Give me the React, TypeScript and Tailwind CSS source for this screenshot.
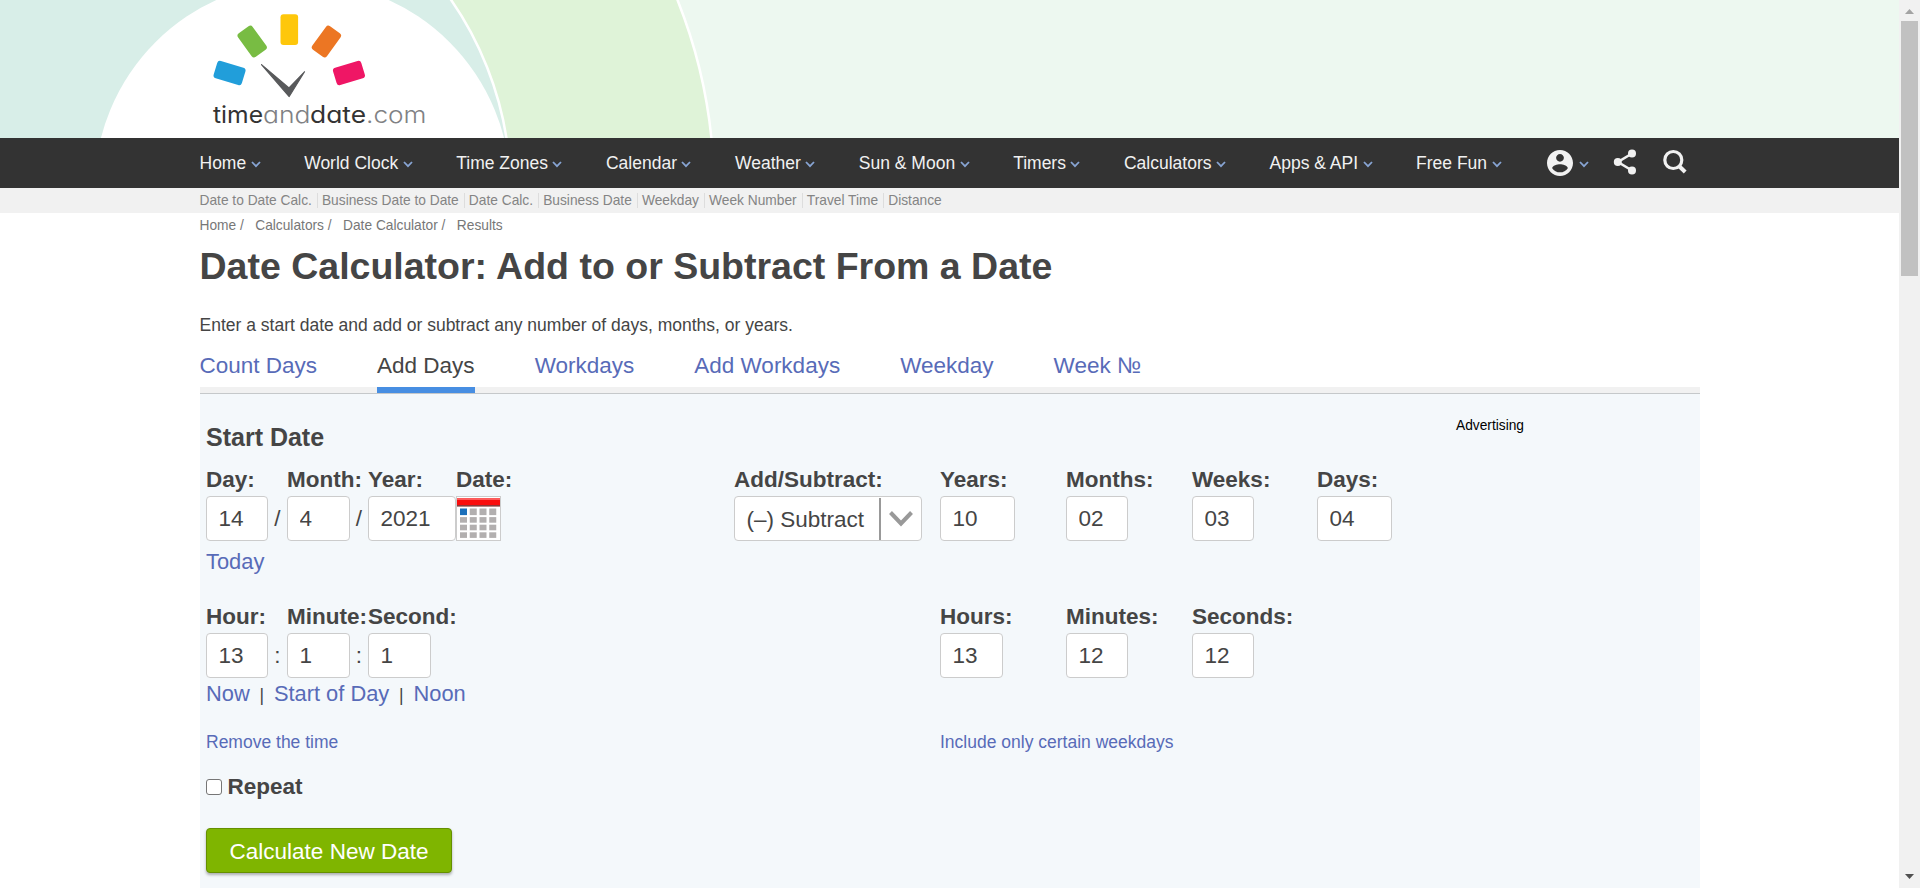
import type { ReactNode } from "react";

const navItems = [
  "Home", "World Clock", "Time Zones", "Calendar", "Weather",
  "Sun & Moon", "Timers", "Calculators", "Apps & API", "Free Fun",
];
const subItems = [
  "Date to Date Calc.", "Business Date to Date", "Date Calc.", "Business Date",
  "Weekday", "Week Number", "Travel Time", "Distance",
];
const crumbs = ["Home /", "Calculators /", "Date Calculator /", "Results"];
const tabs = ["Count Days", "Add Days", "Workdays", "Add Workdays", "Weekday", "Week №"];

function Chevron() {
  return (
    <svg className="mt-[2px] h-[7px] w-[10px]" viewBox="0 0 10 7" fill="none" stroke="#87a4d3" strokeWidth="1.8">
      <path d="M1 1l4 4.2L9 1" />
    </svg>
  );
}

function Banner() {
  return (
    <header className="h-[138px] bg-[#edf8f0]">
      <svg className="block" width="1899" height="138" viewBox="0 0 1899 138">
        <circle cx="201" cy="190" r="513" fill="#dff3d8" stroke="#fff" strokeWidth="2.5" />
        <circle cx="177" cy="190" r="333.5" fill="#d8eee8" stroke="#fff" strokeWidth="2.5" />
        <rect width="100" height="138" fill="#d8eee8" />
        <circle cx="302.5" cy="189.3" r="208" fill="#fff" />
        <rect x="214.800" y="64" width="29.500" height="18" rx="3" fill="#219eda" transform="rotate(17 229.5 73)" />
        <rect x="243.3" y="27" width="18" height="29" rx="3" fill="#78bc43" transform="rotate(-36 252.3 41.7)" />
        <rect x="280.5" y="14.3" width="17.6" height="30.7" rx="3" fill="#fec70b" />
        <rect x="317.3" y="27" width="18" height="29" rx="3" fill="#ec7623" transform="rotate(36 326.3 41.7)" />
        <rect x="334.200" y="64" width="29.500" height="18" rx="3" fill="#ef1665" transform="rotate(-17 349 73)" />
        <path d="M261.500 64.600L289 88L304.500 71.800L289.200 96.500Z" fill="#58595b" stroke="#58595b" strokeWidth="1.2" strokeLinejoin="round" />
        <g className="font-['Inter',sans-serif] [font-feature-settings:'cv11']" fontSize="23.6">
          <text x="213" y="122.7" textLength="50" lengthAdjust="spacingAndGlyphs" fill="#333" fontWeight="400">time</text>
          <text x="263" y="122.7" textLength="47.5" lengthAdjust="spacingAndGlyphs" fill="#808184" fontWeight="300">and</text>
          <text x="310" y="122.7" textLength="56" lengthAdjust="spacingAndGlyphs" fill="#333" fontWeight="400">date</text>
          <text x="366" y="122.7" textLength="60.5" lengthAdjust="spacingAndGlyphs" fill="#808184" fontWeight="300">.com</text>
        </g>
      </svg>
    </header>
  );
}

function Field({ label, value, width, cell, after }: {
  label: string; value: string; width: string; cell: string; after?: string;
}) {
  return (
    <div className={cell}>
      <div className="h-[28px] pt-px text-[22.5px] leading-[28px] font-bold whitespace-nowrap">{label}</div>
      <div className="mt-[3px] flex items-center">
        <input
          defaultValue={value}
          className={"h-[45px] rounded-[4px] border border-[#ccc] bg-white pl-[11.5px] text-[22.5px] " + width}
        />
        {after && <span className="w-[19px] text-center text-[22.5px]">{after}</span>}
      </div>
    </div>
  );
}

function CalendarIcon() {
  return (
    <svg className="mt-[3px] block" width="45" height="45" viewBox="0 0 45 45">
      <rect x=".5" y=".5" width="44" height="44" fill="#fff" stroke="#ccc" />
      <rect x="1" y="2" width="43" height="8" fill="#f90d0d" />
      <rect x="1" y="2" width="43" height="2" fill="#fc5a5a" />
      <rect x="1" y="9" width="43" height="1.6" fill="#8a3a3a" />
      {[0, 1, 2, 3].map((r) =>
        [0, 1, 2, 3].map((c) => (
          <rect
            key={r + "-" + c}
            x={4 + c * 9.75}
            y={r === 0 ? 12.5 : 13.5 + r * 7.6}
            width="7"
            height={r === 0 ? 6.6 : 5.6}
            fill={r === 0 && c === 0 ? "#1a6fba" : "#b2afaf"}
          />
        ))
      )}
    </svg>
  );
}

function Link({ children, className }: { children: ReactNode; className?: string }) {
  return <a className={"text-[#586bb8] " + (className ?? "")}>{children}</a>;
}

function Scrollbar() {
  return (
    <div className="flex h-[888px] w-[21px] flex-col items-center justify-between bg-[#f1f1f1]">
      <div className="flex flex-col items-center">
        <svg className="mt-[9px] h-[5px] w-[9px]" viewBox="0 0 9 5"><path d="M4.500 0L9 5H0z" fill="#a3a3a3" /></svg>
        <div className="mt-[7px] h-[255px] w-[17px] bg-[#c1c1c1]" />
      </div>
      <svg className="mb-[9px] h-[5px] w-[9px]" viewBox="0 0 9 5"><path d="M4.500 5L9 0H0z" fill="#505050" /></svg>
    </div>
  );
}

export default function App() {
  return (
    <div className="flex h-[888px] w-[1920px] overflow-hidden bg-white font-['Liberation_Sans',Arial,sans-serif] text-[#454545]">
      <div className="w-[1899px]">
        <Banner />
        <nav className="h-[50px] bg-[#333]">
          <div className="mx-auto flex h-full w-[1500px] items-center">
            <div className="flex w-[1347px] items-center gap-[43.5px] text-[17.5px] whitespace-nowrap text-[#f1f1f1]">
              {navItems.map((n) => (
                <div key={n} className="flex items-center gap-[4.500px]">
                  {n}
                  <Chevron />
                </div>
              ))}
            </div>
            <svg className="mr-[6px] h-[26px] w-[26px]" viewBox="2 2 20 20" fill="#f1f1f1">
              <path d="M12 2C6.480 2 2 6.480 2 12s4.480 10 10 10 10-4.480 10-10S17.520 2 12 2zm0 3c1.660 0 3 1.340 3 3s-1.340 3-3 3-3-1.340-3-3 1.340-3 3-3zm0 14.200c-2.500 0-4.710-1.280-6-3.220.030-1.990 4-3.080 6-3.080 1.990 0 5.970 1.090 6 3.080-1.290 1.940-3.500 3.220-6 3.220z" />
            </svg>
            <Chevron />
            <svg className="-mt-[3px] ml-[24px] h-[26px] w-[24px]" viewBox="0 0 24 26" fill="#f1f1f1">
              <path d="M19 4.500L5 13l14 8.500" fill="none" stroke="#f1f1f1" strokeWidth="2.600" />
              <circle cx="19" cy="4.500" r="4" />
              <circle cx="4.800" cy="13" r="4" />
              <circle cx="19" cy="21.500" r="4" />
            </svg>
            <svg className="-mt-[4px] ml-[26px] h-[25px] w-[24px]" viewBox="0 0 24 25" fill="none" stroke="#f1f1f1" strokeWidth="3.200">
              <circle cx="10.300" cy="11" r="8.500" />
              <path d="M16 17l6.200 6" strokeWidth="4" />
            </svg>
          </div>
        </nav>
        <div className="h-[25px] bg-[#f1f1f1]">
          <div className="mx-auto flex h-full w-[1500px] items-center text-[13.75px] text-[#848484]">
            {subItems.map((s, i) => (
              <span
                key={s}
                className={"mr-[4.1px] h-[15px] pr-[5px] leading-[15px] " + (i < subItems.length - 1 ? "border-r border-[#ddd]" : "")}
              >
                {s}
              </span>
            ))}
          </div>
        </div>
        <main className="mx-auto w-[1500px]">
          <div className="flex h-[24px] gap-[11.4px] pt-px text-[13.75px] leading-[24px] text-[#777]">
            {crumbs.map((c) => <span key={c}>{c}</span>)}
          </div>
          <h1 className="mt-[7px] h-[44px] text-[37.5px] leading-[44px] font-bold">
            Date Calculator: Add to or Subtract From a Date
          </h1>
          <p className="mt-[25px] h-[24px] text-[17.5px] leading-[24px]">
            Enter a start date and add or subtract any number of days, months, or years.
          </p>
          <div className="mt-[13px] flex h-[44px] gap-[60px] border-b border-[#c5c8ca] bg-[linear-gradient(to_bottom,#fff_37px,#f1f1f1_37px)] text-[22.5px]">
            {tabs.map((t) => (
              <div
                key={t}
                className={
                  "h-[43px] pt-px leading-[30px] " +
                  (t === "Add Days" ? "border-b-[6px] border-[#478ee2] text-[#454545]" : "text-[#586bb8]")
                }
              >
                {t}
              </div>
            ))}
          </div>
          <section className="flex h-[500px] bg-[#f4f8fb] pt-[28px] pl-[6.500px]">
            <div className="w-[528px] shrink-0">
              <h2 className="h-[30px] text-[25px] leading-[30px] font-bold">Start Date</h2>
              <div className="mt-[13px] flex">
                <Field label="Day:" value="14" width="w-[62px]" cell="w-[81px]" after="/" />
                <Field label="Month:" value="4" width="w-[63px]" cell="w-[81px]" after="/" />
                <Field label="Year:" value="2021" width="w-[88px]" cell="w-[88px]" />
                <div>
                  <div className="h-[28px] pt-px text-[22.5px] leading-[28px] font-bold">Date:</div>
                  <CalendarIcon />
                </div>
              </div>
              <Link className="mt-[7px] block h-[28px] text-[21.875px] leading-[28px]">Today</Link>
              <div className="mt-[26px] flex">
                <Field label="Hour:" value="13" width="w-[62px]" cell="w-[81px]" after=":" />
                <Field label="Minute:" value="1" width="w-[63px]" cell="w-[81px]" after=":" />
                <Field label="Second:" value="1" width="w-[63px]" cell="w-[87px]" />
              </div>
              <div className="mt-[2px] flex h-[28px] items-baseline gap-[9.8px] text-[21.875px] leading-[28px]">
                <Link>Now</Link>
                <span className="text-[17.5px]">|</span>
                <Link>Start of Day</Link>
                <span className="text-[17.5px]">|</span>
                <Link>Noon</Link>
              </div>
              <Link className="mt-[22px] block h-[24px] text-[17.5px] leading-[24px]">Remove the time</Link>
              <label className="mt-[18px] flex h-[30px] items-center gap-[5.500px] text-[22.5px] leading-[30px] font-bold">
                <input type="checkbox" className="h-[16px] w-[16px] appearance-none rounded-[3px] border border-[#767676] bg-white" />
                Repeat
              </label>
              <button className="mt-[26px] block h-[45px] w-[246px] rounded-[4px] border border-[#659000] bg-[#7fb500] pt-[2px] text-[22.5px] text-white shadow-[0_2px_3px_rgba(0,0,0,0.3)]">
                Calculate New Date
              </button>
            </div>
            <div className="w-[722px] shrink-0 pt-[43px]">
              <div className="flex">
                <div className="w-[206px] shrink-0">
                  <div className="h-[28px] pt-px text-[22.5px] leading-[28px] font-bold">Add/Subtract:</div>
                  <div className="mt-[3px] flex h-[45px] w-[188px] justify-between rounded-[4px] border border-[#ccc] bg-white">
                    <span className="pl-[11.5px] text-[22.5px] leading-[46px]">(–) Subtract</span>
                    <div className="mt-px flex w-[42px] items-center justify-center border-l-2 border-[#999]">
                      <svg width="24" height="16" viewBox="0 0 24 16" fill="none" stroke="#999" strokeWidth="4">
                        <path d="M1.500 1.500L12 12.500L22.500 1.500" />
                      </svg>
                    </div>
                  </div>
                </div>
                <Field label="Years:" value="10" width="w-[75px]" cell="w-[126px]" />
                <Field label="Months:" value="02" width="w-[62px]" cell="w-[126px]" />
                <Field label="Weeks:" value="03" width="w-[62px]" cell="w-[125px]" />
                <Field label="Days:" value="04" width="w-[75px]" cell="w-[126px]" />
              </div>
              <div className="mt-[61px] ml-[206px] flex">
                <Field label="Hours:" value="13" width="w-[63px]" cell="w-[126px]" />
                <Field label="Minutes:" value="12" width="w-[62px]" cell="w-[126px]" />
                <Field label="Seconds:" value="12" width="w-[62px]" cell="w-[126px]" />
              </div>
              <Link className="mt-[52px] ml-[206px] block h-[24px] text-[17.5px] leading-[24px]">
                Include only certain weekdays
              </Link>
            </div>
            <div className="-mt-[4px] text-[13.75px] leading-[16px] text-black">Advertising</div>
          </section>
        </main>
      </div>
      <Scrollbar />
    </div>
  );
}
